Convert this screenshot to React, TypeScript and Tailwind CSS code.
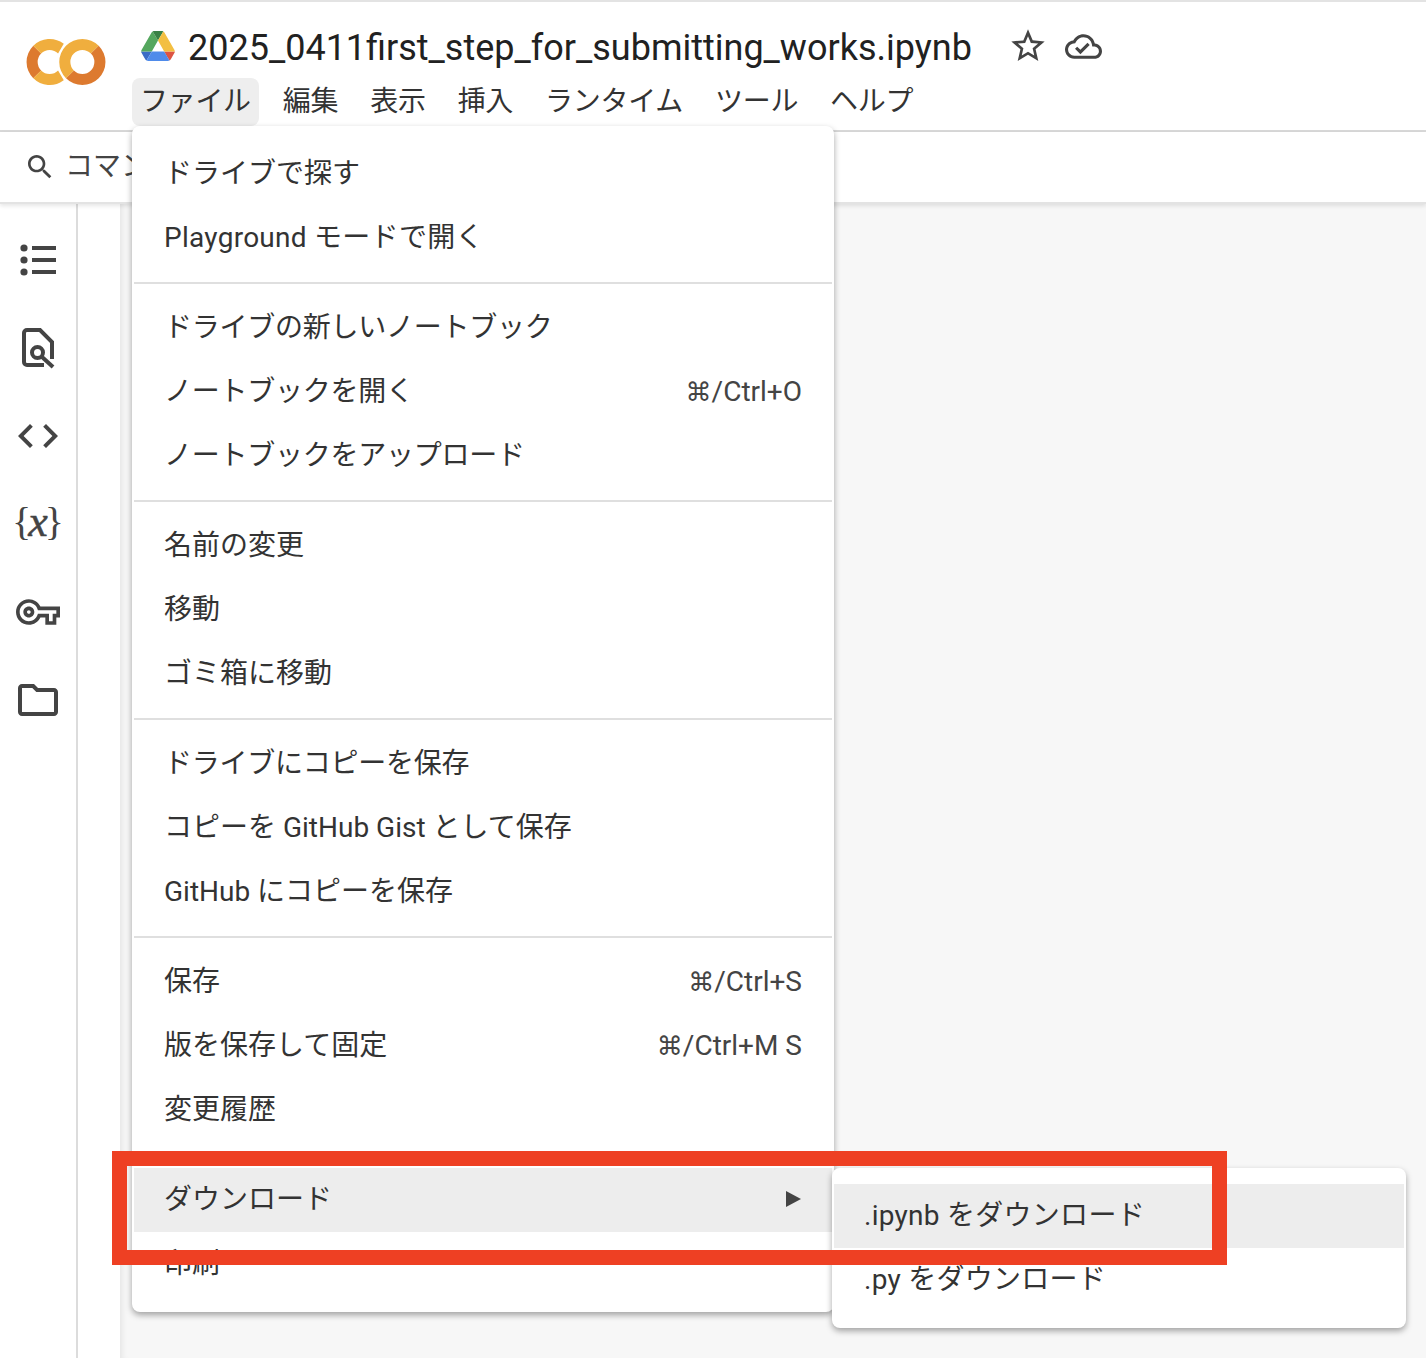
import React from "react";

type Row = { label: string; shortcut?: string; active?: boolean; arrow?: boolean; track?: string };

const ICON_COLOR = "#444444";
const KANA_TIGHT = "tracking-[-0.25px]";
const LATIN_WIDE = "tracking-[0.27px]";

// menu groups, separated by a thin rule
const fileMenu: Row[][] = [
  [{ label: "ドライブで探す" }, { label: "Playground モードで開く", track: LATIN_WIDE }],
  [
    { label: "ドライブの新しいノートブック", track: KANA_TIGHT },
    { label: "ノートブックを開く", shortcut: "/Ctrl+O", track: KANA_TIGHT },
    { label: "ノートブックをアップロード", track: KANA_TIGHT },
  ],
  [{ label: "名前の変更" }, { label: "移動" }, { label: "ゴミ箱に移動" }],
  [
    { label: "ドライブにコピーを保存", track: KANA_TIGHT },
    { label: "コピーを GitHub Gist として保存" },
    { label: "GitHub にコピーを保存" },
  ],
  [
    { label: "保存", shortcut: "/Ctrl+S" },
    { label: "版を保存して固定", shortcut: "/Ctrl+M S" },
    { label: "変更履歴" },
  ],
  [{ label: "ダウンロード", active: true, arrow: true }, { label: "印刷" }],
];

const menuBar = ["ファイル", "編集", "表示", "挿入", "ランタイム", "ツール", "ヘルプ"];

function Icon({ d, size = 48 }: { d: string; size?: number }) {
  return (
    <svg width={size} height={size} viewBox="0 0 24 24" fill={ICON_COLOR}>
      <path d={d} />
    </svg>
  );
}

function ColabLogo() {
  return (
    <svg width="80" height="80" viewBox="0 0 24 24" className="shrink-0">
      <path d="M4.54,9.46,2.19,7.1a6.93,6.93,0,0,0,0,9.79l2.36-2.36A3.59,3.59,0,0,1,4.54,9.46Z" fill="#dd7a2f" />
      <path d="M2.19,7.1,4.54,9.46a3.59,3.59,0,0,1,5.08,0l1.71-2.93h0l-.1-.08h0A6.93,6.93,0,0,0,2.19,7.1Z" fill="#f0ae3e" />
      <path d="M11.34,17.46h0L9.62,14.54a3.59,3.59,0,0,1-5.08,0L2.19,16.9a6.93,6.93,0,0,0,9,.65l.11-.09" fill="#f0ae3e" />
      <path d="M12,7.1a6.93,6.93,0,0,0,0,9.79l2.36-2.36a3.59,3.59,0,1,1,5.08-5.08L21.81,7.1A6.93,6.93,0,0,0,12,7.1Z" fill="#f0ae3e" />
      <path d="M21.81,7.1,19.46,9.46a3.59,3.59,0,0,1-5.08,5.08L12,16.9A6.93,6.93,0,0,0,21.81,7.1Z" fill="#dd7a2f" />
    </svg>
  );
}

function DriveLogo() {
  return (
    <svg width="34" height="30" viewBox="0 0 87.3 78" className="shrink-0">
      <path d="m6.6 66.85 3.85 6.65c.8 1.4 1.95 2.5 3.3 3.3l13.75-23.8h-27.5c0 1.55.4 3.1 1.2 4.5z" fill="#3a6cc6" />
      <path d="m43.65 25-13.75-23.8c-1.35.8-2.5 1.9-3.3 3.3l-25.4 44a9.06 9.06 0 0 0 -1.2 4.5h27.5z" fill="#54a75e" />
      <path d="m73.55 76.8c1.35-.8 2.5-1.9 3.3-3.3l1.6-2.75 7.65-13.25c.8-1.4 1.2-2.95 1.2-4.5h-27.502l5.852 11.5z" fill="#dc5443" />
      <path d="m43.65 25 13.75-23.8c-1.35-.8-2.9-1.2-4.5-1.2h-18.5c-1.6 0-3.15.45-4.5 1.2z" fill="#3a8145" />
      <path d="m59.8 53h-32.3l-13.75 23.8c1.35.8 2.9 1.2 4.5 1.2h50.8c1.6 0 3.15-.45 4.5-1.2z" fill="#4f8bea" />
      <path d="m73.4 26.5-12.7-22c-.8-1.4-1.95-2.5-3.3-3.3l-13.75 23.8 16.15 28h27.45c0-1.55-.4-3.1-1.2-4.5z" fill="#f3bf42" />
    </svg>
  );
}

function Sidebar() {
  return (
    <div className="flex w-[78px] shrink-0 flex-col items-center border-r-2 border-[#dcdcdc] bg-white pt-[12px]">
      <div className="flex h-[88px] items-center justify-center">
        <svg width="48" height="48" viewBox="0 0 48 48" fill={ICON_COLOR}>
          <circle cx="10" cy="12" r="3.6" />
          <circle cx="10" cy="24" r="3.6" />
          <circle cx="10" cy="36" r="3.6" />
          <rect x="18" y="10" width="24" height="4" />
          <rect x="18" y="22" width="24" height="4" />
          <rect x="18" y="34" width="24" height="4" />
        </svg>
      </div>
      <div className="flex h-[88px] items-center justify-center">
        <svg width="48" height="48" viewBox="0 0 48 48" fill="none" stroke={ICON_COLOR} strokeWidth="4">
          <path d="M30 41H13a3 3 0 0 1-3-3V9a3 3 0 0 1 3-3H26L38 18V35" />
          <circle cx="23.5" cy="28.5" r="5.5" />
          <path d="M27.5 32.5L39 43" />
        </svg>
      </div>
      <div className="flex h-[88px] items-center justify-center">
        <Icon d="M9.4 16.6L4.8 12l4.6-4.6L8 6l-6 6 6 6 1.4-1.4zm5.2 0l4.6-4.6-4.6-4.6L16 6l6 6-6 6-1.4-1.4z" />
      </div>
      <div className="flex h-[88px] items-center justify-center pb-1 font-['Liberation_Serif',serif] text-[40px] leading-none text-[#444444]">
        {"{"}
        <span className="-mx-[3px] text-[44px] italic leading-none [-webkit-text-stroke:0.5px_#444444]">x</span>
        {"}"}
      </div>
      <div className="flex h-[88px] items-center justify-center">
        <Icon size={44} d="M22 19h-6v-4h-2.68c-1.14 2.42-3.6 4-6.32 4-3.86 0-7-3.14-7-7s3.14-7 7-7c2.72 0 5.17 1.58 6.32 4H24v6h-2v4zm-4-2h2v-4h2v-2H11.94l-.23-.67C11.01 8.34 9.11 7 7 7c-2.76 0-5 2.24-5 5s2.24 5 5 5c2.11 0 4.01-1.34 4.71-3.33l.23-.67H18v4zM7 15c-1.65 0-3-1.35-3-3s1.35-3 3-3 3 1.35 3 3-1.35 3-3 3zm0-4c-.55 0-1 .45-1 1s.45 1 1 1 1-.45 1-1-.45-1-1-1z" />
      </div>
      <div className="flex h-[88px] items-center justify-center">
        <Icon d="M9.17 6l2 2H20v10H4V6h5.17M10 4H4c-1.1 0-1.99.9-1.99 2L2 18c0 1.1.9 2 2 2h16c1.1 0 2-.9 2-2V8c0-1.1-.9-2-2-2h-8l-2-2z" />
      </div>
    </div>
  );
}

function MenuRow({ row }: { row: Row }) {
  return (
    <div className={`flex h-16 items-center justify-between px-[30px] ${row.active ? "bg-[#ededed]" : ""}`}>
      <span className={row.track}>{row.label}</span>
      {row.shortcut && (
        <span className="text-[#444444]">
          <span className="font-['DejaVu_Sans',sans-serif] text-[26px]">⌘</span>
          {row.shortcut}
        </span>
      )}
      {row.arrow && (
        <svg width="16" height="16" viewBox="0 0 16 16" fill={ICON_COLOR} className="mb-[2px] mr-px">
          <path d="M1 0l15 8-15 8z" />
        </svg>
      )}
    </div>
  );
}

function FileMenu() {
  return (
    <div className="absolute left-[132px] top-[126px] z-10 w-[702px] rounded-lg bg-white px-[2px] py-4 text-[28px] text-[#333333] shadow-[0_3px_6px_rgba(0,0,0,0.35)]">
      {fileMenu.map((group, i) => (
        <div key={i}>
          {i > 0 && <div className="my-3 h-[2px] bg-[#dfdfdf]" />}
          {group.map((row) => (
            <MenuRow key={row.label} row={row} />
          ))}
        </div>
      ))}
    </div>
  );
}

function DownloadMenu() {
  return (
    <div className="absolute left-[832px] top-[1168px] z-20 w-[574px] rounded-lg bg-white px-[2px] py-4 text-[28px] text-[#333333] shadow-[0_3px_6px_rgba(0,0,0,0.35)]">
      <MenuRow row={{ label: ".ipynb をダウンロード", active: true, track: LATIN_WIDE }} />
      <MenuRow row={{ label: ".py をダウンロード", track: LATIN_WIDE }} />
    </div>
  );
}

export default function App() {
  return (
    <div className="relative flex h-[1358px] w-[1426px] flex-col overflow-hidden bg-white font-['Roboto','Noto_Sans_CJK_JP',sans-serif]">
      <header className="flex h-[132px] shrink-0 items-start border-b-2 border-t-2 border-b-[#d8d8d8] border-t-[#e3e3e3] pl-[26px]">
        <div className="mt-5">
          <ColabLogo />
        </div>
        <div className="ml-[26px] flex flex-col">
          <div className="flex h-[76px] items-center pt-[14px]">
            <div className="ml-[9px] -mt-[2px]">
              <DriveLogo />
            </div>
            <span className="ml-[13px] mt-[2px] text-[36px] leading-none text-[#212121]">2025_0411first_step_for_submitting_works.ipynb</span>
            <div className="ml-[36px] -mt-[2px]">
              <Icon size={40} d="M22 9.24l-7.19-.62L12 2 9.19 8.63 2 9.24l5.46 4.73L5.82 21 12 17.27 18.18 21l-1.63-7.03L22 9.24zM12 15.4l-3.76 2.27 1-4.28-3.32-2.88 4.38-.38L12 6.1l1.71 4.04 4.38.38-3.32 2.88 1 4.28L12 15.4z" />
            </div>
            <div className="ml-[17px] -mt-[2px]">
              <Icon size={37} d="M19.35 10.04C18.67 6.59 15.64 4 12 4 9.11 4 6.6 5.64 5.35 8.04 2.34 8.36 0 10.91 0 14c0 3.31 2.69 6 6 6h13c2.76 0 5-2.24 5-5 0-2.64-2.05-4.78-4.65-4.96zM19 18H6c-2.21 0-4-1.79-4-4 0-2.05 1.53-3.76 3.56-3.97l1.07-.11.5-.95C8.08 7.14 9.94 6 12 6c2.62 0 4.88 1.86 5.39 4.43l.3 1.5 1.53.11c1.56.1 2.78 1.41 2.78 2.96 0 1.65-1.35 3-3 3zm-9-3.82l-2.09-2.09L6.5 13.5 10 17l6.01-6.01-1.41-1.41z" />
            </div>
          </div>
          <nav className="flex gap-4 text-[28px] tracking-[-0.3px] text-[#333333]">
            {menuBar.map((item, i) => (
              <div key={item} className={`flex h-12 items-center rounded-lg px-2 ${i === 0 ? "bg-[#eeeeee]" : ""}`}>
                {item}
              </div>
            ))}
          </nav>
        </div>
      </header>

      <div className="z-[1] flex h-[72px] shrink-0 items-center border-b-2 border-[#e3e3e3] pl-[24px] text-[28px] text-[#444444] shadow-[0_2px_4px_rgba(0,0,0,0.1)]">
        <Icon size={32} d="M15.5 14h-.79l-.28-.27C15.41 12.59 16 11.11 16 9.5 16 5.91 13.09 3 9.5 3S3 5.91 3 9.5 5.91 16 9.5 16c1.61 0 3.09-.59 4.23-1.57l.27.28v.79l5 4.99L20.49 19l-4.99-5zm-6 0C7.01 14 5 11.99 5 9.5S7.01 5 9.5 5 14 7.01 14 9.5 11.99 14 9.5 14z" />
        <span className="ml-[9px]">コマンド</span>
      </div>

      <div className="flex min-h-0 flex-1">
        <Sidebar />
        <div className="w-[42px] shrink-0 bg-white" />
        <div className="flex-1 bg-[#f7f7f7] shadow-[inset_7px_0_6px_-5px_rgba(0,0,0,0.08)]" />
      </div>

      <FileMenu />
      <DownloadMenu />
      {/* annotation drawn over the screenshot */}
      <div className="absolute left-[112px] top-[1151px] z-30 h-[114px] w-[1115px] border-[15px] border-[#ee4023]" />
    </div>
  );
}
